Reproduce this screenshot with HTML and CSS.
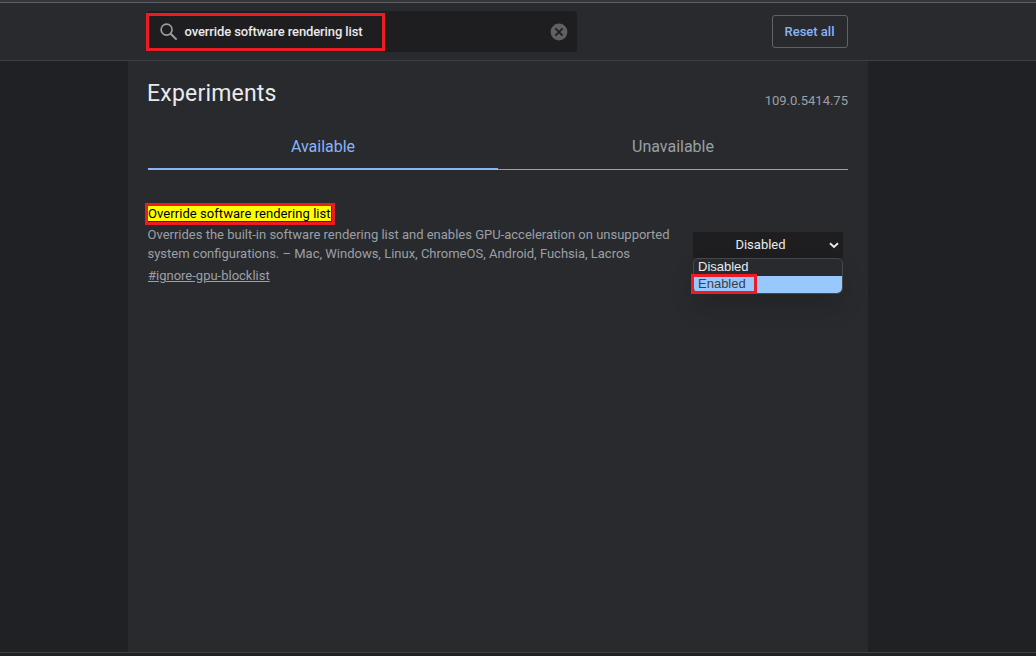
FILE: index.html
```html
<!DOCTYPE html>
<html lang="en">
<head>
  <meta charset="UTF-8" />
  <title>Experiments</title>
  <link rel="stylesheet" href="styles.css">
</head>
<body>
  <header class="header">
    <div class="search">
      <svg class="search-icon" width="18" height="18" viewBox="0 0 18 18">
        <circle cx="6.6" cy="6.6" r="5.5" fill="none" stroke="#9aa0a6" stroke-width="1.6" />
        <path d="M10.7 10.7L16.6 16.6" stroke="#9aa0a6" stroke-width="2" />
      </svg>
      <span class="search-text">override software rendering list</span>
      <svg class="clear-icon" width="18" height="18" viewBox="0 0 18 18">
        <circle cx="9" cy="9" r="8.4" fill="#5f6063" />
        <path d="M5.4 5.4L12.6 12.6M12.6 5.4L5.4 12.6" stroke="#1e1e20" stroke-width="1.8" />
      </svg>
      <div class="mark mark-search"></div>
    </div>
    <button class="reset-btn">Reset all</button>
  </header>

  <main class="content">
    <div class="title-row">
      <h1>Experiments</h1>
      <span class="version">109.0.5414.75</span>
    </div>

    <div class="tabs">
      <div class="tab active">Available</div>
      <div class="tab">Unavailable</div>
    </div>

    <div class="experiment">
      <div class="info">
        <h2><span class="highlight">Override software rendering list<span class="mark mark-name"></span></span></h2>
        <p>Overrides the built-in software rendering list and enables GPU-acceleration on unsupported system configurations. – Mac, Windows, Linux, ChromeOS, Android, Fuchsia, Lacros</p>
        <a class="permalink">#ignore-gpu-blocklist</a>
      </div>
      <div class="select">
        <span class="select-value">Disabled</span>
        <svg class="arrow" width="10" height="7" viewBox="0 0 10 7">
          <path d="M1 1.2L5 5L9 1.2" fill="none" stroke="#e8eaed" stroke-width="1.9" />
        </svg>
        <div class="options">
          <div class="option">Disabled</div>
          <div class="option selected">Enabled</div>
        </div>
        <div class="mark mark-option"></div>
      </div>
    </div>
  </main>
  <footer class="bottom"></footer>
</body>
</html>
```
FILE: styles.css
```css
* {
  margin: 0;
  padding: 0;
  box-sizing: border-box;
}

body {
  background: #202124;
  height: 100vh;
  overflow: hidden;
  display: flex;
  flex-direction: column;
  font-family: Roboto, sans-serif;
  font-size: 13px;
  color: #e8eaed;
  border-top: 2px solid #35363a;
}

.header {
  height: 59px;
  flex: none;
  display: flex;
  justify-content: space-between;
  align-items: center;
  padding: 0 188px 0 147px;
  background: #292a2d;
  border-top: 1px solid #5f6063;
  border-bottom: 1px solid #3f4042;
}

.search {
  position: relative;
  width: 430px;
  height: 41px;
  display: flex;
  align-items: center;
  padding: 0 9px 0 13px;
  background: #1e1e20;
  border-radius: 3px;
}

.search-text {
  margin-left: 6.5px;
  font-weight: 500;
  letter-spacing: -0.1px;
  flex: 1;
}

.reset-btn {
  width: 76px;
  height: 33px;
  padding-right: 1px;
  background: none;
  border: 1px solid #5f6368;
  border-radius: 3px;
  color: #8ab4f8;
  font-family: inherit;
  font-size: 13px;
  font-weight: 500;
}

/* red call-outs */
.mark {
  position: absolute;
  border: 3px solid #ed1c24;
}

.mark-search {
  left: -1px;
  top: 2px;
  width: 239px;
  height: 38px;
}

.mark-name {
  left: -3px;
  top: -3px;
  width: 190px;
  height: 22px;
}

.mark-option {
  left: -2px;
  top: 42px;
  width: 66px;
  height: 20px;
}

.content {
  width: 740px;
  flex: 1;
  margin-left: 128px;
  padding: 0 20px;
  background: #292a2d;
}

.title-row {
  display: flex;
  justify-content: space-between;
  height: 64px;
}

h1 {
  padding-top: 19px;
  margin-left: -1px;
  font-size: 23px;
  font-weight: 400;
  letter-spacing: 0.2px;
  line-height: 28px;
}

.version {
  padding-top: 32px;
  line-height: 16px;
  color: #9aa0a6;
}

.tabs {
  display: flex;
  height: 45px;
}

.tab {
  flex: 1;
  padding-top: 12px;
  text-align: center;
  font-size: 16px;
  line-height: 20px;
  color: #9aa0a6;
  border-bottom: 1px solid #9aa0a6;
}

.tab.active {
  color: #8ab4f8;
  border-bottom: 2px solid #8ab4f8;
}

.experiment {
  display: flex;
  justify-content: space-between;
  padding: 36px 5px 0 0;
}

.info {
  width: 530px;
}

h2 {
  display: flex;
  font-size: 13px;
  font-weight: 400;
  line-height: 15px;
}

.highlight {
  position: relative;
  background: #ff0;
  color: #000;
  letter-spacing: 0.06px;
}

.info p {
  padding-top: 4px;
  margin-left: -0.5px;
  line-height: 19px;
  color: #9aa0a6;
}

.permalink {
  display: block;
  padding-top: 5px;
  line-height: 16px;
  color: #9aa0a6;
  text-decoration: underline;
}

.select {
  position: relative;
  width: 150px;
  height: 26px;
  margin-top: 26px;
  display: flex;
  align-items: center;
  padding-right: 4px;
  background: #1e1e20;
}

.select-value {
  flex: 1;
  padding: 0 1px 2px 0;
  text-align: center;
}

.options {
  position: absolute;
  left: 0;
  top: 26px;
  width: 150px;
  height: 36px;
  background: #292a2d;
  border: 1px solid #47484b;
  border-radius: 6px;
  overflow: hidden;
  box-shadow: 0 14px 24px rgba(0, 0, 0, 0.14);
}

.option {
  height: 17px;
  padding-left: 4px;
  font-family: "Liberation Sans", Arial, sans-serif;
  line-height: 16px;
}

.option.selected {
  background: #99c8ff;
  color: #3c4043;
}

.bottom {
  height: 4px;
  flex: none;
  border-top: 1px solid #3e403d;
  background: #202124;
}
```
